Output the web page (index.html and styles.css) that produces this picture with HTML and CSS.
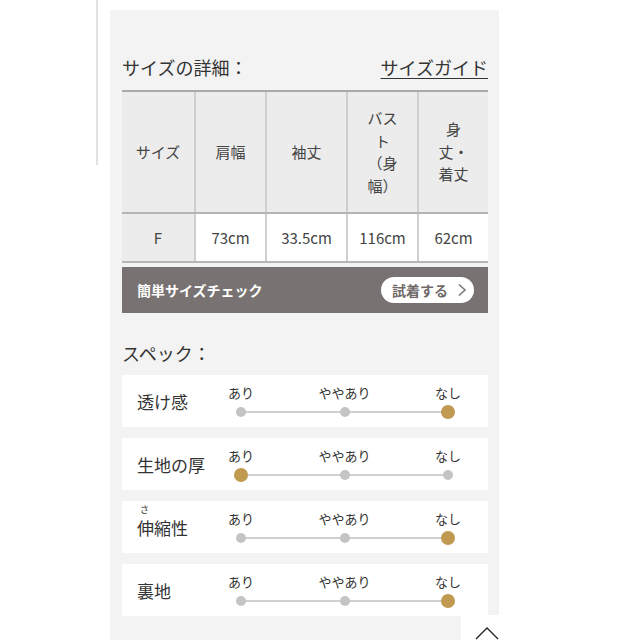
FILE: index.html
```html
<!DOCTYPE html>
<html lang="ja">
<head>
<meta charset="utf-8">
<link rel="stylesheet" href="styles.css">
</head>
<body>
<div class="page">
  <div class="side"><div class="side-line"></div></div>
  <main class="panel">
    <div class="title-row">
      <h2 class="title">サイズの詳細：</h2>
      <a class="guide">サイズガイド</a>
    </div>
    <table class="size-table">
      <colgroup>
        <col class="c1"><col class="c2"><col class="c3"><col class="c4"><col class="c5">
      </colgroup>
      <thead>
        <tr>
          <th class="first">サイズ</th>
          <th>肩幅</th>
          <th>袖丈</th>
          <th>バスト（身幅）</th>
          <th>身丈・着丈</th>
        </tr>
      </thead>
      <tbody>
        <tr>
          <td class="first">F</td>
          <td>73cm</td>
          <td>33.5cm</td>
          <td>116cm</td>
          <td>62cm</td>
        </tr>
      </tbody>
    </table>
    <div class="check-bar">
      <span class="check-label">簡単サイズチェック</span>
      <button class="try-btn">試着する<svg class="chev" width="10" height="14" viewBox="0 0 10 14"><path d="M2 1.5 L8 7 L2 12.5" fill="none" stroke="#777" stroke-width="1.6"/></svg></button>
    </div>
    <h2 class="spec-title">スペック：</h2>
    <div class="specs">
      <div class="spec-row">
        <div class="spec-label">透け感</div>
        <div class="scale">
          <div class="opt"><span>あり</span><i class="dot"></i></div>
          <div class="opt"><span>ややあり</span><i class="dot"></i></div>
          <div class="opt"><span>なし</span><i class="dot on"></i></div>
        </div>
      </div>
      <div class="spec-row">
        <div class="spec-label">生地の厚</div>
        <div class="scale">
          <div class="opt"><span>あり</span><i class="dot on"></i></div>
          <div class="opt"><span>ややあり</span><i class="dot"></i></div>
          <div class="opt"><span>なし</span><i class="dot"></i></div>
        </div>
      </div>
      <div class="spec-row">
        <div class="spec-label ruby-label"><span class="ruby">さ</span><span class="ruby-text">伸縮性</span></div>
        <div class="scale">
          <div class="opt"><span>あり</span><i class="dot"></i></div>
          <div class="opt"><span>ややあり</span><i class="dot"></i></div>
          <div class="opt"><span>なし</span><i class="dot on"></i></div>
        </div>
      </div>
      <div class="spec-row">
        <div class="spec-label">裏地</div>
        <div class="scale">
          <div class="opt"><span>あり</span><i class="dot"></i></div>
          <div class="opt"><span>ややあり</span><i class="dot"></i></div>
          <div class="opt"><span>なし</span><i class="dot on"></i></div>
        </div>
      </div>
    </div>
  </main>
</div>
<a class="to-top"><svg width="24" height="14" viewBox="0 0 24 14"><path d="M1 13 L12 2 L23 13" fill="none" stroke="#222" stroke-width="1.3"/></svg></a>
</body>
</html>
```

FILE: styles.css
```css
* { box-sizing: border-box; }
html, body { margin: 0; padding: 0; background: #fff; }
body {
  font-family: "Noto Sans CJK JP", "Noto Sans", sans-serif;
  color: #333;
  width: 640px;
  height: 640px;
  overflow: hidden;
  position: relative;
}
.page { display: flex; align-items: flex-start; }
.side { width: 98px; flex: none; }
.side-line { width: 2px; height: 165px; margin-left: 96px; background: #e2e2e2; }
.panel {
  margin-left: 12px;
  margin-top: 10px;
  width: 389px;
  height: 640px;
  background: #f3f3f3;
  padding: 43px 11px 0 12px;
}
.title-row {
  display: flex;
  justify-content: space-between;
  align-items: center;
  height: 28px;
}
.title {
  margin: 0;
  font-size: 18px;
  font-weight: 400;
  color: #333;
  line-height: 28px;
}
.guide {
  font-size: 18px;
  color: #333;
  text-decoration: underline;
  text-underline-offset: 3px;
  text-decoration-thickness: 1px;
  line-height: 28px;
}
.size-table {
  margin-top: 9px;
  width: 366px;
  table-layout: fixed;
  border-collapse: collapse;
  font-size: 15px;
  color: #444;
}
.c1 { width: 73px; }
.c2 { width: 71px; }
.c3 { width: 81px; }
.c4 { width: 71px; }
.c5 { width: 70px; }
.size-table th, .size-table td {
  text-align: center;
  font-weight: 400;
  border-left: 2px solid #cfcfcf;
}
.size-table th.first, .size-table td.first { border-left: none; }
.size-table th {
  background: #ececec;
  height: 122px;
  padding: 14px 14px;
  line-height: 22.5px;
  border-top: 2px solid #a9a9a9;
  border-bottom: 2px solid #b5b5b5;
}
.size-table th.first { padding: 0 6px; }
.size-table td {
  background: #fff;
  height: 49px;
  padding: 0 4px;
  border-bottom: 2px solid #b5b5b5;
}
.size-table td.first { background: #ececec; }
.check-bar {
  margin-top: 4px;
  height: 46px;
  background: #787372;
  display: flex;
  align-items: center;
  justify-content: space-between;
  padding: 0 14px 0 15px;
}
.check-label {
  color: #fff;
  font-weight: 700;
  font-size: 14px;
}
.try-btn {
  width: 93px;
  height: 26px;
  border: none;
  border-radius: 13px;
  background: #fff;
  color: #6f6a69;
  font-family: inherit;
  font-weight: 700;
  font-size: 14px;
  display: flex;
  align-items: center;
  justify-content: center;
  gap: 9px;
  padding: 0 0 0 4px;
}
.chev { display: block; }
.spec-title {
  margin: 27px 0 0;
  font-size: 18px;
  font-weight: 400;
  line-height: 26px;
  color: #333;
}
.specs {
  margin-top: 9px;
  display: flex;
  flex-direction: column;
  gap: 11px;
}
.spec-row {
  height: 52px;
  background: #fff;
  display: flex;
  align-items: center;
  padding-left: 15px;
}
.spec-label {
  width: 77px;
  flex: none;
  font-size: 17px;
  color: #333;
}
.ruby-label {
  align-self: flex-start;
  padding-top: 4px;
  display: flex;
  flex-direction: column;
}
.ruby {
  display: block;
  margin-left: 3px;
  font-size: 9px;
  line-height: 9px;
  height: 9px;
  margin-bottom: 5px;
  color: #333;
}
.ruby-text { display: block; line-height: 17px; }
.scale {
  width: 261px;
  height: 52px;
  display: flex;
  justify-content: space-between;
  position: relative;
}
.scale::before {
  content: "";
  position: absolute;
  left: 27px;
  right: 27px;
  top: 36px;
  height: 2px;
  background: #cfcfcf;
}
.opt {
  width: 54px;
  display: flex;
  flex-direction: column;
  align-items: center;
  padding-top: 9px;
  position: relative;
}
.opt span {
  font-size: 13px;
  line-height: 18px;
  color: #333;
  white-space: nowrap;
}
.dot {
  margin-top: 3px;
  width: 14px;
  height: 14px;
  display: flex;
  align-items: center;
  justify-content: center;
}
.dot::after {
  content: "";
  width: 10px;
  height: 10px;
  border-radius: 50%;
  background: #c4c4c4;
}
.dot.on::after {
  width: 14px;
  height: 14px;
  background: #c09a50;
}
.to-top {
  position: absolute;
  left: 461px;
  top: 615px;
  width: 52px;
  height: 52px;
  background: #fff;
  display: flex;
  justify-content: center;
  padding-top: 11px;
}
.to-top svg { display: block; }
```
